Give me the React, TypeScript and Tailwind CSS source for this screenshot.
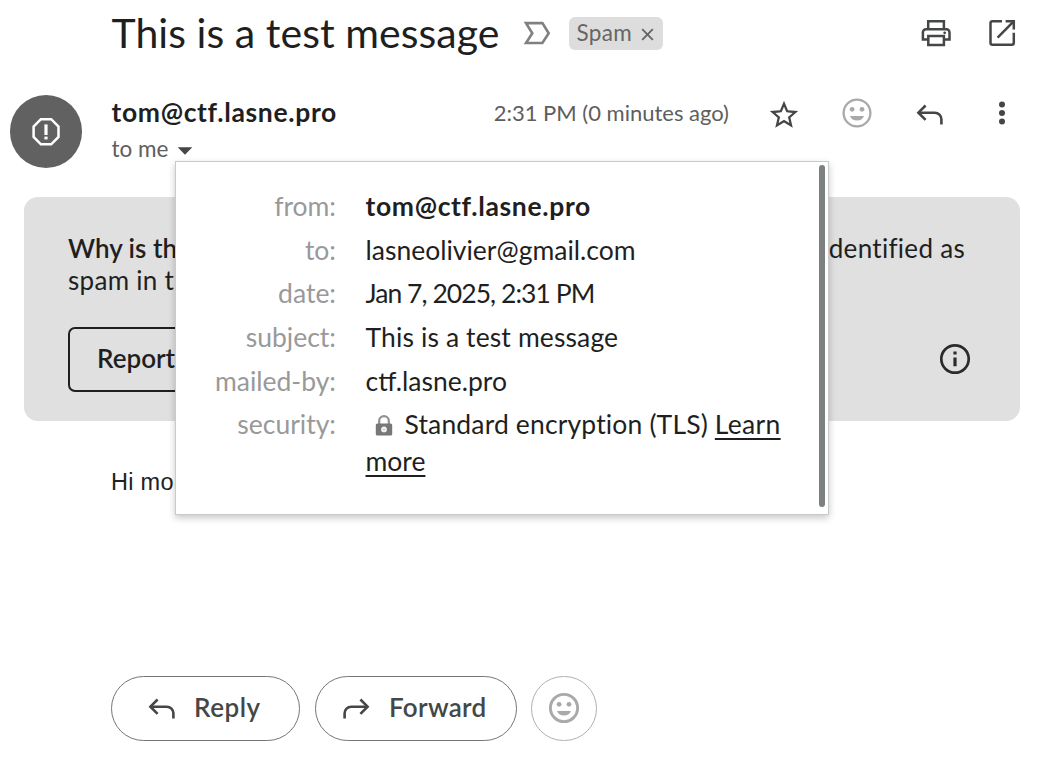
import type { ReactNode } from "react";

type IconProps = { className?: string };

function ImportanceIcon({ className }: IconProps) {
  return (
    <svg className={className} width="30" height="26" viewBox="0 0 30 26" fill="none" stroke="#808080" strokeWidth="2.6">
      <path d="M4 3.1H20.4L26.7 13.2L20.4 23H4L10.3 13.2Z" />
    </svg>
  );
}

function PrintIcon({ className }: IconProps) {
  return (
    <svg className={className} width="32" height="32" viewBox="0 0 32 32" fill="none" stroke="#444746" strokeWidth="2.5">
      <path d="M8.2 11.5V4.2H23.9V11.5" />
      <path d="M8.2 22.6H2.9V15.3a3.1 3.1 0 0 1 3.1-3.1H26.4a3.1 3.1 0 0 1 3.1 3.1V22.6H24" />
      <path d="M8.3 18.9H23.9V27.9H8.3Z" />
      <circle cx="24.7" cy="15.8" r="1.4" fill="#444746" stroke="none" />
    </svg>
  );
}

function OpenInNewIcon({ className }: IconProps) {
  return (
    <svg className={className} width="32" height="32" viewBox="0 0 32 32" fill="none" stroke="#444746" strokeWidth="2.5">
      <path d="M16 4.2H6.5a2 2 0 0 0-2 2V25.8a2 2 0 0 0 2 2H25.8a2 2 0 0 0 2-2V15.8" />
      <path d="M19.6 4.2H27.8V12.6" />
      <path d="M11.6 20.6L27.4 4.6" />
    </svg>
  );
}

function StarIcon({ className }: IconProps) {
  return (
    <svg className={className} width="34" height="34" viewBox="0 0 24 24" fill="#444746">
      <path d="M22 9.24l-7.19-.62L12 2 9.19 8.63 2 9.24l5.46 4.73L5.82 21 12 17.27 18.18 21l-1.63-7.03L22 9.24zM12 15.4l-3.76 2.27 1-4.28-3.32-2.88 4.38-.38L12 6.1l1.71 4.04 4.38.38-3.32 2.88 1 4.28L12 15.4z" />
    </svg>
  );
}

function SmileIcon({ className, heavy }: IconProps & { heavy?: boolean }) {
  return (
    <svg className={className} width="32" height="32" viewBox="0 0 32 32" fill="#a9a9a9">
      <circle cx="16" cy="16" r={heavy ? 13.6 : 13.4} fill="none" stroke="#a9a9a9" strokeWidth={heavy ? 2.9 : 2.3} />
      <circle cx="11.1" cy="12.3" r="2.4" />
      <circle cx="21" cy="12.3" r="2.4" />
      <path d="M9 18.9H23C21.9 21.8 19.3 23.6 16 23.6S10.1 21.8 9 18.9Z" />
    </svg>
  );
}

function ReplyIcon({ className }: IconProps) {
  return (
    <svg className={className} width="28" height="22" viewBox="0 0 28 22" fill="none" stroke="#444746" strokeWidth="2.6">
      <path d="M9.6 1.5L2.4 8.7L9.6 15.9" />
      <path d="M2.6 8.7H18.8a6.6 6.6 0 0 1 6.6 6.6V20.4" />
    </svg>
  );
}

function AlertIcon() {
  return (
    <svg width="32" height="32" viewBox="0 0 32 32" fill="none" stroke="#fff" strokeWidth="2.5">
      <path d="M10.9 3.2H21.2L28.5 10.6V21L21.2 28.3H10.9L3.6 21V10.6Z" />
      <path d="M16 8.4V19" strokeWidth="3.2" />
      <path d="M16 20.6V23.4" strokeWidth="3.2" />
    </svg>
  );
}

function InfoIcon() {
  return (
    <svg width="32" height="32" viewBox="0 0 32 32" fill="none" stroke="#2b2b2b">
      <circle cx="16" cy="16" r="13.7" strokeWidth="2.7" />
      <path d="M16 14.6V23.3M16 8.4V11.4" strokeWidth="3.2" />
    </svg>
  );
}

function LockIcon() {
  return (
    <svg className="ml-[9px] mr-[12px] inline-block align-[-2px]" width="18" height="21" viewBox="0 0 18 21">
      <path d="M4.2 9V5.8a4.8 4.6 0 0 1 9.6 0V9" fill="none" stroke="#919191" strokeWidth="2.2" />
      <rect x="0.8" y="8.6" width="16.4" height="12" rx="1.5" fill="#777" />
      <circle cx="9" cy="14.4" r="2.9" fill="#f2f2f2" />
      <circle cx="9" cy="14.4" r="1" fill="#ccc" />
    </svg>
  );
}

function Field({ label, children }: { label: string; children: ReactNode }) {
  return (
    <div className="flex">
      <div className="w-[160px] shrink-0 text-right text-[#999]">{label}</div>
      <div className="ml-[29.5px] w-[425px] whitespace-normal text-[#1f1f1f]">{children}</div>
    </div>
  );
}

function DetailsPopup() {
  return (
    <div className="absolute left-[175px] top-[161px] flex h-[354px] w-[654px] border border-[#c9cbcb] bg-white pt-[26px] shadow-[0_3px_7px_rgba(0,0,0,0.22)]">
      <div className="flex flex-1 flex-col gap-[6.7px] text-[26.5px] leading-[37px]">
        <Field label="from:">
          <span className="font-bold tracking-[0.66px]">tom@ctf.lasne.pro</span>
        </Field>
        <Field label="to:">lasneolivier@gmail.com</Field>
        <Field label="date:">
          <span className="tracking-[-0.95px]">Jan 7, 2025, 2:31 PM</span>
        </Field>
        <Field label="subject:">
          <span className="tracking-[0.12px]">This is a test message</span>
        </Field>
        <Field label="mailed-by:">ctf.lasne.pro</Field>
        <Field label="security:">
          <LockIcon />
          <span className="tracking-[0.15px]">Standard encryption (TLS) </span>
          <span className="tracking-[0.3px] underline decoration-2 underline-offset-[4px] [text-decoration-skip-ink:none]">Learn </span>
          <span className="underline decoration-2 underline-offset-[4px] [text-decoration-skip-ink:none]">more</span>
        </Field>
      </div>
      <div className="mr-[3px] mt-[-23px] h-[342px] w-[6px] shrink-0 rounded-full bg-[#7c8080]" />
    </div>
  );
}

export default function App() {
  return (
    <div className="relative h-[767px] w-[1043px] overflow-hidden whitespace-nowrap bg-white font-['Lato','Open_Sans',sans-serif] text-[#1f1f1f]">
      <header className="flex h-[67px] items-center pl-[111.5px] pr-[25px]">
        <h1 className="pb-[2px] text-[41px] leading-[50px] tracking-[0.05px]">This is a test message</h1>
        <ImportanceIcon className="ml-[23px] mt-[-1px]" />
        <div className="ml-[17px] flex h-[33px] w-[94px] items-center rounded-[6px] bg-[#ddd] pl-[7px] text-[22.5px] leading-[32px] text-[#666]">
          <span className="pb-px tracking-[0.35px]">Spam</span>
          <svg className="ml-[9px] mt-[2px]" width="13" height="13" viewBox="0 0 13 13" stroke="#666" strokeWidth="1.9">
            <path d="M1.2 1.2L11.8 11.8M11.8 1.2L1.2 11.8" />
          </svg>
        </div>
        <PrintIcon className="ml-auto mt-[-1px]" />
        <OpenInNewIcon className="ml-[34px] mt-[-1px]" />
      </header>

      <section className="flex h-[130px] items-start pl-[10px] pt-[28px]">
        <div className="flex h-[73px] w-[72px] items-center justify-center rounded-full bg-[#616161]">
          <AlertIcon />
        </div>
        <div className="ml-[29.5px] pt-px">
          <div className="text-[26.5px] font-bold leading-[32px] tracking-[0.66px]">tom@ctf.lasne.pro</div>
          <div className="mt-[7px] flex items-center text-[22.5px] leading-[28px] text-[#5e5e5e]">
            to me
            <svg className="ml-[9px] mt-[4px]" width="16" height="8" viewBox="0 0 16 8" fill="#444746">
              <path d="M0.7 0.3H15.3L8 7.8Z" />
            </svg>
          </div>
        </div>
        <div className="ml-auto flex items-center pr-[37px]">
          <span className="mr-[38px] pb-[3px] text-[22px] leading-[35px] text-[#5e5e5e]">2:31 PM (0 minutes ago)</span>
          <StarIcon className="mt-[2px]" />
          <SmileIcon className="ml-[40px] mt-[-2px]" />
          <ReplyIcon className="ml-[43px] mt-px" />
          <svg className="ml-[54px] mt-[-2px]" width="8" height="24" viewBox="0 0 8 24" fill="#444746">
            <circle cx="4" cy="3.5" r="3" />
            <circle cx="4" cy="12" r="3" />
            <circle cx="4" cy="20.4" r="3" />
          </svg>
        </div>
      </section>

      <section className="ml-[24px] h-[224px] w-[996px] rounded-[14px] bg-[#e0e0e0] pl-[44px] pr-[55px] pt-[35px] text-[26px]">
        <div className="flex justify-between leading-[32px]">
          <b className="font-semibold">Why is this in spam?</b>
          <span className="tracking-[0.3px]">This message is similar to others identified as</span>
        </div>
        <div className="leading-[32px] tracking-[0.3px]">spam in the past.</div>
        <div className="mt-[31px] flex items-center justify-between">
          <button className="h-[65px] rounded-[7px] border-2 border-[#1f1f1f] px-[27px] pb-[2px] font-semibold">Report spam</button>
          <div className="-mr-[6px] mt-[-2px]">
            <InfoIcon />
          </div>
        </div>
      </section>

      <main className="h-[255px] pl-[111px] pt-[47px] font-['Liberation_Sans',Arial,sans-serif] text-[23.5px] leading-[28px] tracking-[0.3px] text-[#222]">
        Hi mom
      </main>

      <footer className="flex gap-[15px] pl-[111px] text-[26px] font-semibold text-[#444746]">
        <button className="flex h-[65px] w-[189px] items-center rounded-full border border-[#747775] pl-[36px]">
          <ReplyIcon />
          <span className="ml-[18px] pb-[2px] tracking-[0.5px]">Reply</span>
        </button>
        <button className="flex h-[65px] w-[202px] items-center rounded-full border border-[#747775] pl-[26px]">
          <ReplyIcon className="-scale-x-100" />
          <span className="ml-[19px] pb-[2px] tracking-[0.3px]">Forward</span>
        </button>
        <button className="-ml-px flex h-[65px] w-[66px] items-center justify-center rounded-full border border-[#b0b0b0] pb-px">
          <SmileIcon heavy />
        </button>
      </footer>

      <DetailsPopup />
    </div>
  );
}
